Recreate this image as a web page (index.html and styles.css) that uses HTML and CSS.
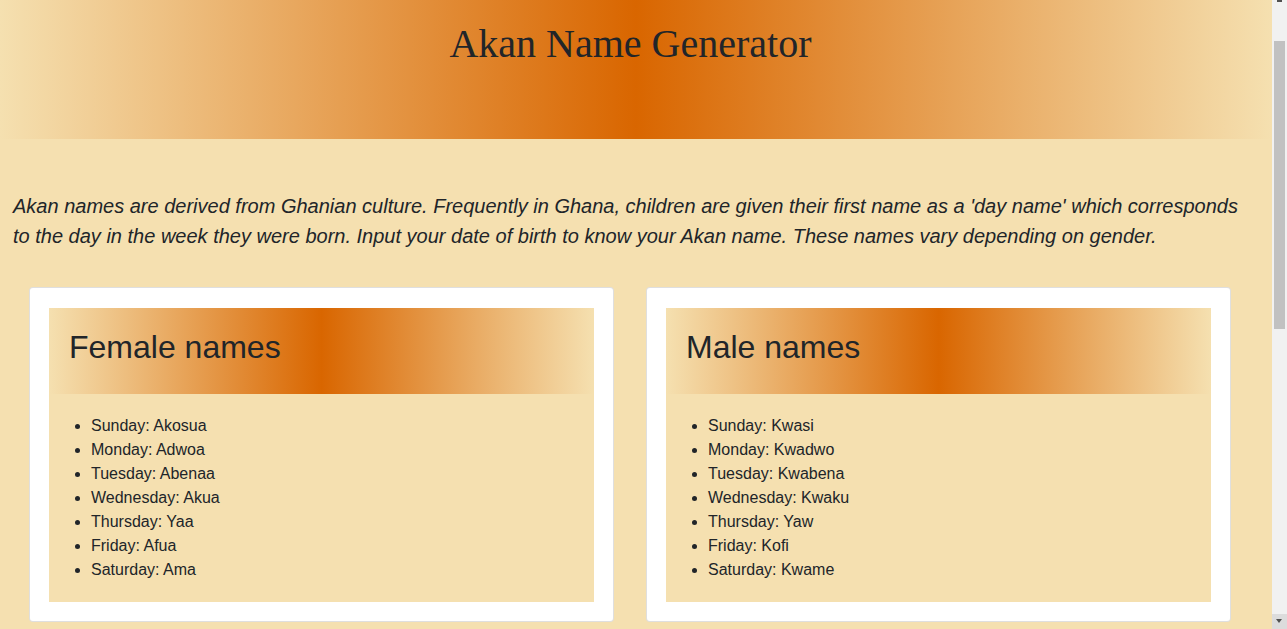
FILE: index.html
```html
<!DOCTYPE html>
<html lang="en">
<head>
<meta charset="utf-8">
<title>Akan Name Generator</title>
<link rel="stylesheet" href="styles.css">
</head>
<body>
<header class="banner">
  <h1 class="banner-title">Akan Name Generator</h1>
</header>
<main class="main">
  <p class="intro">Akan names are derived from Ghanian culture. Frequently in Ghana, children are given their first name as a 'day name' which corresponds to the day in the week they were born. Input your date of birth to know your Akan name. These names vary depending on gender.</p>
  <section class="cards">
    <div class="card">
      <div class="panel">
        <div class="panel-head"><h2 class="panel-title">Female names</h2></div>
        <ul class="names">
          <li>Sunday: Akosua</li>
          <li>Monday: Adwoa</li>
          <li>Tuesday: Abenaa</li>
          <li>Wednesday: Akua</li>
          <li>Thursday: Yaa</li>
          <li>Friday: Afua</li>
          <li>Saturday: Ama</li>
        </ul>
      </div>
    </div>
    <div class="card">
      <div class="panel">
        <div class="panel-head"><h2 class="panel-title">Male names</h2></div>
        <ul class="names">
          <li>Sunday: Kwasi</li>
          <li>Monday: Kwadwo</li>
          <li>Tuesday: Kwabena</li>
          <li>Wednesday: Kwaku</li>
          <li>Thursday: Yaw</li>
          <li>Friday: Kofi</li>
          <li>Saturday: Kwame</li>
        </ul>
      </div>
    </div>
  </section>
</main>
<div class="scrollbar" aria-hidden="true">
  <div class="scroll-up"></div>
  <div class="scroll-thumb"></div>
  <div class="scroll-down"></div>
</div>
</body>
</html>
```
FILE: styles.css
```css
html, body {
  margin: 0;
  padding: 0;
}
html {
  scrollbar-width: none;
}
html::-webkit-scrollbar {
  display: none;
}
body {
  margin-right: 15px;
  background: #f5e0b0;
  color: #212529;
  font-family: "Liberation Sans", Arial, sans-serif;
  font-size: 16px;
  line-height: 1.5;
}
.banner {
  height: 139px;
  box-sizing: border-box;
  padding-top: 20px;
  background: linear-gradient(to right, #f5e0b0 0%, #d96600 50%, #f5e0b0 100%);
}
.banner-title {
  margin: 0;
  font-family: "Liberation Serif", "Times New Roman", serif;
  font-weight: 400;
  font-size: 40px;
  line-height: 48px;
  text-align: center;
  padding-right: 11px;
  color: #212529;
}
.main {
  padding-bottom: 686px;
}
.intro {
  margin: 52px 0 36px;
  padding: 0 20px 0 13px;
  font-style: italic;
  font-size: 20px;
  line-height: 30px;
}
.cards {
  display: grid;
  grid-template-columns: 1fr 1fr;
  column-gap: 32px;
  padding: 0 41px 0 29px;
}
.card {
  background: #fff;
  border: 1px solid rgba(0, 0, 0, 0.125);
  border-radius: 4px;
  padding: 20px 19px 19px;
}
.panel {
  background: #f5e0b0;
}
.panel-head {
  padding: 20px;
  background: linear-gradient(to right, #f5e0b0 0%, #d96600 50%, #f5e0b0 100%);
}
.panel-title {
  margin: 0 0 8px;
  font-size: 32px;
  font-weight: 400;
  line-height: 38.4px;
}
.names {
  margin: 0;
  padding: 20px 0 20px 42px;
  line-height: 24px;
}
.scrollbar {
  position: fixed;
  top: 0;
  right: 0;
  width: 15px;
  height: 100vh;
  background: #f1f1f1;
}
.scroll-up {
  position: absolute;
  top: 0;
  left: 5px;
  width: 5px;
  height: 0;
  border-top: 2px solid #505050;
}
.scroll-thumb {
  position: absolute;
  top: 41px;
  left: 2px;
  width: 11px;
  height: 288px;
  background: #c1c1c1;
}
.scroll-down {
  position: absolute;
  bottom: 0;
  left: 0;
  width: 15px;
  height: 15px;
  background: #dcdcdc;
}
.scroll-down::after {
  content: "";
  position: absolute;
  top: 5px;
  left: 4px;
  border-left: 3.5px solid transparent;
  border-right: 3.5px solid transparent;
  border-top: 4px solid #505050;
}
```
